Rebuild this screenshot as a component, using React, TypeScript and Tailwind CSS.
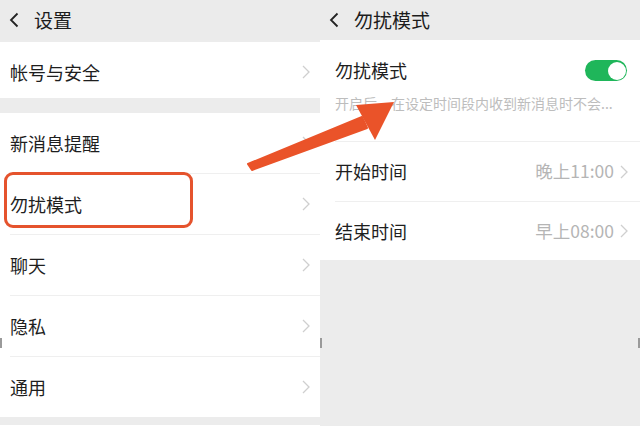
const font = "font-['Noto_Sans_CJK_SC','Noto_Sans',sans-serif]";

const Chevron = ({ className = "" }: { className?: string }) => (
  <svg width="8" height="14" viewBox="0 0 8 14" className={className}>
    <path d="M1 1l6 6-6 6" fill="none" stroke="#cfcfcf" strokeWidth="1.3" />
  </svg>
);

const BackArrow = () => (
  <svg width="10" height="16" viewBox="0 0 10 16">
    <path d="M8.5 1.5L2 8l6.5 6.5" fill="none" stroke="#222" strokeWidth="1.8" />
  </svg>
);

const Header = ({ title }: { title: string }) => (
  <div className="flex h-[40px] items-center gap-[15px] bg-[#ebebeb] pl-[9px]">
    <BackArrow />
    <span className="text-[19px] text-[#1c1c1c]">{title}</span>
  </div>
);

const SettingRow = ({ label }: { label: string }) => (
  <div className="flex h-[60px] items-center justify-between pr-[10px] pl-[10px]">
    <span className="text-[18px] text-[#1e1e1e]">{label}</span>
    <Chevron />
  </div>
);

const Divider = () => <div className="ml-[10px] h-px bg-[#efefef]" />;

export default function App() {
  const rows = ["新消息提醒", "勿扰模式", "聊天", "隐私", "通用"];

  return (
    <div className={`relative flex h-[432px] w-[640px] overflow-hidden bg-white ${font}`}>
      <section className="flex w-[320px] flex-col bg-[#ececec]">
        <Header title="设置" />
        <div className="mt-[2px] flex h-[56px] items-center justify-between bg-white pt-[4px] pr-[10px] pl-[10px]">
          <span className="text-[18px] text-[#1e1e1e]">帐号与安全</span>
          <Chevron />
        </div>
        <div className="h-[15px]" />
        <div className="bg-white">
          {rows.map((label, i) => (
            <div key={label}>
              {i > 0 ? <Divider /> : null}
              <SettingRow label={label} />
            </div>
          ))}
        </div>
        <div className="h-[8px]" />
        <div className="flex-1 bg-white" />
      </section>

      <section className="flex w-[320px] flex-col bg-[#ececec]">
        <Header title="勿扰模式" />
        <div className="bg-white">
          <div className="flex h-[101px] flex-col px-[15px] pt-[17px]">
            <div className="flex items-center justify-between">
              <span className="text-[18px] text-[#1e1e1e]">勿扰模式</span>
              <div className="mr-[-2px] flex h-[21px] w-[42px] items-center justify-end rounded-full bg-[#1fb65a] p-[1.5px]">
                <div className="h-[18px] w-[18px] rounded-full bg-white" />
              </div>
            </div>
            <span className="mt-[9px] truncate text-[14px] text-[#bdbdbd]">
              开启后，在设定时间段内收到新消息时不会...
            </span>
          </div>
          <div className="ml-[15px] h-px bg-[#efefef]" />
          <div className="flex h-[59px] items-center justify-between pr-[12px] pl-[15px]">
            <span className="text-[18px] text-[#1e1e1e]">开始时间</span>
            <div className="flex items-center gap-[6px]">
              <span className="text-[17.5px] text-[#b5b5b5]">晚上11:00</span>
              <Chevron />
            </div>
          </div>
          <div className="ml-[15px] h-px bg-[#efefef]" />
          <div className="flex h-[58px] items-center justify-between pr-[12px] pl-[15px]">
            <span className="text-[18px] text-[#1e1e1e]">结束时间</span>
            <div className="flex items-center gap-[6px]">
              <span className="text-[17.5px] text-[#b5b5b5]">早上08:00</span>
              <Chevron />
            </div>
          </div>
        </div>
        <div className="flex-1" />
        <div className="h-[6px] bg-white" />
      </section>

      {/* annotation overlay */}
      <div className="absolute top-[172px] left-[4px] h-[56px] w-[189px] rounded-[9px] border-[3px] border-[#e5532d]" />
      <div className="absolute top-[338px] left-0 h-[10px] w-[2px] bg-[#9a9a9a]" />
      <div className="absolute top-[338px] left-[320px] h-[10px] w-[2px] bg-[#9a9a9a]" />
      <div className="absolute top-[338px] right-0 h-[10px] w-[2px] bg-[#9a9a9a]" />
      <svg className="absolute top-0 left-0" width="640" height="432" viewBox="0 0 640 432">
        <polygon
          points="248,164 252,170 367,128 362,117"
          fill="#ea5329"
          stroke="#ea5329"
          strokeWidth="2"
          strokeLinejoin="round"
        />
        <polygon points="356,105 394,102 375,140" fill="#ea5329" />
      </svg>
    </div>
  );
}
